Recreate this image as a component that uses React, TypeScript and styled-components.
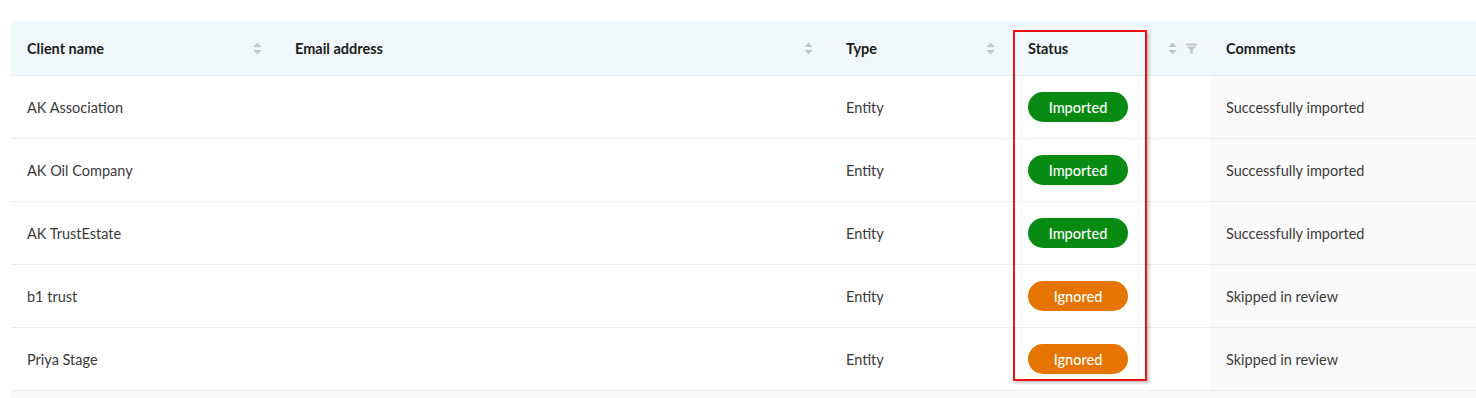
import styled, { createGlobalStyle } from 'styled-components'

const GlobalS = createGlobalStyle`
    html, body {
        margin: 0;
        padding: 0;
        background: #ffffff;
        overflow: hidden;
    }
    body {
        font-family: Lato, "Noto Sans", sans-serif;
        color: #333333;
    }
`

const PageS = styled.div`
    position: relative;
    width: 1476px;
    height: 398px;
    padding: 21px 0 0 11px;
    box-sizing: border-box;
`

const TableS = styled.table`
    width: 1465px;
    border-collapse: separate;
    border-spacing: 0;
    table-layout: fixed;
`

const HeadCellS = styled.th<{ $first?: boolean }>`
    height: 55px;
    padding: 0 16px;
    box-sizing: border-box;
    background: #f1f8fb;
    border-bottom: 1px solid #e8eef0;
    text-align: left;
    font-size: 14.5px;
    font-weight: 700;
    color: #1c1c1c;
    border-top-left-radius: ${ ({ $first }) => $first ? '6px' : '0' };
`

const HeadInnerS = styled.div`
    display: flex;
    align-items: center;
    justify-content: space-between;
`

const IconsS = styled.span<{ $shift?: number }>`
    display: flex;
    align-items: center;
    gap: 9px;
    margin-right: ${ ({ $shift }) => $shift ?? 1 }px;
`

const CellS = styled.td<{ $sorted?: boolean }>`
    height: 63px;
    padding: 0 16px;
    box-sizing: border-box;
    border-bottom: 1px solid #ececec;
    font-size: 14.5px;
    color: #3a3a3a;
    background: ${ ({ $sorted }) => $sorted ? '#fafafa' : '#ffffff' };
`

const PillS = styled.span<{ $status: 'Imported' | 'Ignored' }>`
    display: inline-flex;
    align-items: center;
    justify-content: center;
    width: 100px;
    height: 30px;
    border-radius: 15px;
    font-size: 14.5px;
    font-weight: 500;
    color: #ffffff;
    background: ${ ({ $status }) => $status === 'Imported' ? '#088b13' : '#e67401' };
`

const FootS = styled.div`
    height: 8px;
    width: 1465px;
    background: #fafafa;
`

const HighlightS = styled.div`
    position: absolute;
    left: 1013px;
    top: 30px;
    width: 134px;
    height: 351px;
    box-sizing: border-box;
    border: 2px solid #ee1111;
    box-shadow: 2px 2px 3px rgba(0, 0, 0, 0.25);
    pointer-events: none;
`

const SortIcon = () => (
    <svg width="9" height="13" viewBox="0 0 9 13">
        <path d="M4.5 0.5 L8.5 5 L0.5 5 Z" fill="#c4c4c4" />
        <path d="M0.5 8 L8.5 8 L4.5 12.5 Z" fill="#c4c4c4" />
    </svg>
)

const FilterIcon = () => (
    <svg width="11" height="11" viewBox="0 0 11 11">
        <path d="M0 0.5 H11 V2.5 H0 Z M0.5 3.5 H10.5 L6.8 7 V10.5 H4.2 V7 Z" fill="#c4c4c4" />
    </svg>
)

interface RowI {
    name: string
    email: string
    type: string
    status: 'Imported' | 'Ignored'
    comment: string
}

const rows: RowI[] = [
    { name: 'AK Association', email: '', type: 'Entity', status: 'Imported', comment: 'Successfully imported' },
    { name: 'AK Oil Company', email: '', type: 'Entity', status: 'Imported', comment: 'Successfully imported' },
    { name: 'AK TrustEstate', email: '', type: 'Entity', status: 'Imported', comment: 'Successfully imported' },
    { name: 'b1 trust', email: '', type: 'Entity', status: 'Ignored', comment: 'Skipped in review' },
    { name: 'Priya Stage', email: '', type: 'Entity', status: 'Ignored', comment: 'Skipped in review' }
]

const App = () => {
    return (
        <>
            <GlobalS />
            <PageS>
                <TableS>
                    <colgroup>
                        <col style={{ width: 268 }} />
                        <col style={{ width: 551 }} />
                        <col style={{ width: 182 }} />
                        <col style={{ width: 198 }} />
                        <col style={{ width: 266 }} />
                    </colgroup>
                    <thead>
                        <tr>
                            <HeadCellS $first>
                                <HeadInnerS>Client name<IconsS><SortIcon /></IconsS></HeadInnerS>
                            </HeadCellS>
                            <HeadCellS>
                                <HeadInnerS>Email address<IconsS><SortIcon /></IconsS></HeadInnerS>
                            </HeadCellS>
                            <HeadCellS>
                                <HeadInnerS>Type<IconsS><SortIcon /></IconsS></HeadInnerS>
                            </HeadCellS>
                            <HeadCellS>
                                <HeadInnerS>Status<IconsS $shift={ -3 }><SortIcon /><FilterIcon /></IconsS></HeadInnerS>
                            </HeadCellS>
                            <HeadCellS>
                                <HeadInnerS>Comments</HeadInnerS>
                            </HeadCellS>
                        </tr>
                    </thead>
                    <tbody>
                        {rows.map(r =>
                            <tr key={ r.name }>
                                <CellS>{ r.name }</CellS>
                                <CellS>{ r.email }</CellS>
                                <CellS>{ r.type }</CellS>
                                <CellS><PillS $status={ r.status }>{ r.status }</PillS></CellS>
                                <CellS $sorted>{ r.comment }</CellS>
                            </tr>
                        )}
                    </tbody>
                </TableS>
                <FootS />
                <HighlightS />
            </PageS>
        </>
    )
}

export default App
